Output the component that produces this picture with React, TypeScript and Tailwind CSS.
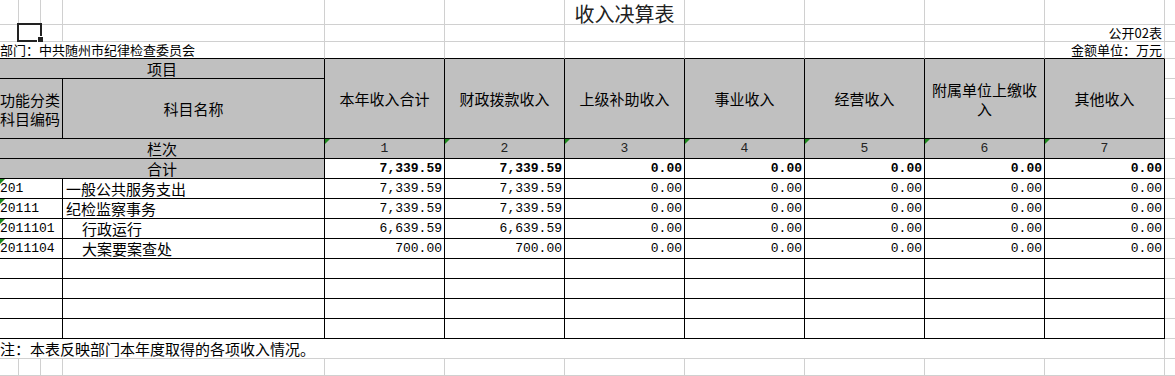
const cjk = "font-['Noto_Sans_CJK_SC',sans-serif]";
const mono = "font-['Liberation_Mono',monospace]";

// gridline cell, table cell, right-hand spare column
const G = "border-r border-b border-[#d0d0d0]";
const T = "border-r border-b border-black";
const M = "border-b border-[#d0d0d0]";

const heads = ["本年收入合计", "财政拨款收入", "上级补助收入", "事业收入", "经营收入", "附属单位上缴收入", "其他收入"];

const zeros = ["0.00", "0.00", "0.00", "0.00", "0.00"];

const rows = [
  { code: "201", name: "一般公共服务支出", indent: false, v: ["7,339.59", "7,339.59", ...zeros] },
  { code: "20111", name: "纪检监察事务", indent: false, v: ["7,339.59", "7,339.59", ...zeros] },
  { code: "2011101", name: "行政运行", indent: true, v: ["6,639.59", "6,639.59", ...zeros] },
  { code: "2011104", name: "大案要案查处", indent: true, v: ["700.00", "700.00", ...zeros] },
];

const total = ["7,339.59", "7,339.59", ...zeros];

function Tri() {
  return (
    <svg className="absolute left-0 top-0" width="6" height="6" viewBox="0 0 6 6">
      <polygon points="0,0 5,0 0,5" fill="#1f8a1f" />
    </svg>
  );
}

export default function App() {
  return (
    <div className={`relative w-[1175px] h-[376px] overflow-hidden bg-white text-black ${cjk}`}>
      <div className="grid grid-cols-[19px_22px_22px_262px_repeat(7,120px)_1fr] grid-rows-[25px_17px_17px_repeat(15,20px)_17px]">
        {/* row 1: title */}
        {[0, 1, 2, 3, 4, 5].map((i) => (
          <div key={"r1" + i} className={G} />
        ))}
        <div className={`${G} flex items-center justify-center pt-[3px] text-[20px] leading-none text-[#222] whitespace-nowrap`}>
          收入决算表
        </div>
        {[0, 1, 2, 3].map((i) => (
          <div key={"r1b" + i} className={G} />
        ))}
        <div className={M} />

        {/* row 2 */}
        {[0, 1, 2, 3, 4, 5, 6, 7, 8, 9].map((i) => (
          <div key={"r2" + i} className={G} />
        ))}
        <div className={`${G} flex items-end justify-end pr-[2px] pb-[1px] text-[13px] leading-[15px] whitespace-nowrap`}>
          公开02表
        </div>
        <div className={M} />

        {/* row 3 */}
        <div className="col-span-4 border-r border-b border-r-[#d0d0d0] border-b-black flex items-end pb-[1px] text-[13px] leading-[15px] whitespace-nowrap">
          部门：中共随州市纪律检查委员会
        </div>
        {[0, 1, 2, 3, 4, 5].map((i) => (
          <div key={"r3" + i} className="border-r border-b border-r-[#d0d0d0] border-b-black" />
        ))}
        <div className="border-r border-b border-r-[#d0d0d0] border-b-black flex items-end justify-end pr-[2px] pb-[1px] text-[13px] leading-[15px] whitespace-nowrap">
          金额单位：万元
        </div>
        <div className={M} />

        {/* header */}
        <div className={`${T} col-span-4 bg-[#c0c0c0] flex items-center justify-center pb-[1px] text-[15px] leading-none`}>项目</div>
        {heads.map((h) => (
          <div key={h} className={`${T} row-span-4 bg-[#c0c0c0] flex items-center justify-center text-center text-[15px] leading-[19px]`}>
            {h === "附属单位上缴收入" ? (
              <span>
                附属单位上缴收
                <br />入
              </span>
            ) : (
              <span className="whitespace-nowrap">{h}</span>
            )}
          </div>
        ))}
        <div className={M} />
        <div className={`${T} col-span-3 row-span-3 bg-[#c0c0c0] flex items-center text-[15px] leading-[19px] whitespace-nowrap`}>
          <span>
            功能分类
            <br />
            科目编码
          </span>
        </div>
        <div className={`${T} row-span-3 bg-[#c0c0c0] flex items-center justify-center text-[15px] leading-none`}>科目名称</div>
        <div className={M} />
        <div className={M} />
        <div className={M} />

        {/* 栏次 */}
        <div className={`${T} col-span-4 bg-[#c0c0c0] flex items-center justify-center pb-[1px] text-[15px] leading-none`}>栏次</div>
        {[1, 2, 3, 4, 5, 6, 7].map((n) => (
          <div key={"n" + n} className={`${T} relative bg-[#c0c0c0] flex items-center justify-center ${mono} text-[13px] leading-none text-[#222]`}>
            <Tri />
            {n}
          </div>
        ))}
        <div className={M} />

        {/* 合计 */}
        <div className={`${T} col-span-4 bg-[#c0c0c0] flex items-center justify-center pb-[1px] text-[15px] leading-none`}>合计</div>
        {total.map((v, i) => (
          <div key={"t" + i} className={`${T} flex items-center justify-end pr-[2px] ${mono} text-[13px] font-bold leading-none`}>
            {v}
          </div>
        ))}
        <div className={M} />

        {/* data rows */}
        {rows.map((r) => (
          <>
            <div key={r.code + "c"} className={`${T} col-span-3 relative flex items-center ${mono} text-[13px] leading-none whitespace-nowrap`}>
              <Tri />
              {r.code}
            </div>
            <div key={r.code + "n"} className={`${T} flex items-center pb-[1px] ${r.indent ? "pl-[19px]" : "pl-[3px]"} text-[15px] leading-none whitespace-nowrap`}>
              {r.name}
            </div>
            {r.v.map((v, i) => (
              <div key={r.code + i} className={`${T} flex items-center justify-end pr-[2px] ${mono} text-[13px] leading-none`}>
                {v}
              </div>
            ))}
            <div key={r.code + "m"} className={M} />
          </>
        ))}

        {/* empty rows */}
        {[0, 1, 2, 3].map((k) => (
          <>
            <div key={"e" + k} className={`${T} col-span-3`} />
            {[0, 1, 2, 3, 4, 5, 6, 7].map((i) => (
              <div key={"e" + k + i} className={T} />
            ))}
            <div key={"em" + k} className={M} />
          </>
        ))}

        {/* note */}
        <div className={`${G} col-span-11 flex items-center pb-[1px] text-[15px] leading-none whitespace-nowrap`}>
          注：本表反映部门本年度取得的各项收入情况。
        </div>
        <div className={M} />

        {/* last row */}
        {[0, 1, 2, 3, 4, 5, 6, 7, 8, 9, 10].map((i) => (
          <div key={"l" + i} className={G} />
        ))}
        <div className={M} />
      </div>

      {/* selected cell */}
      <div className="absolute left-[17px] top-[23px] w-[25px] h-[19px] border-2 border-[#222]" />
      <div className="absolute left-[37px] top-[36px] w-[6px] h-[6px] bg-[#222] border-l border-t border-white" />
    </div>
  );
}
